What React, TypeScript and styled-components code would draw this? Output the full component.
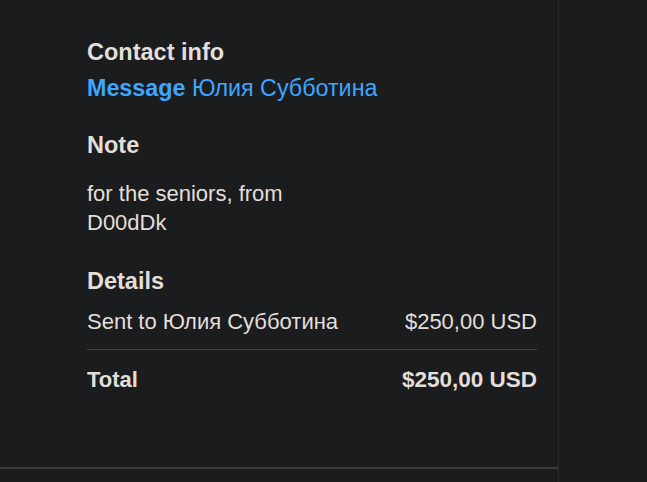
import React from "react";
import styled, { createGlobalStyle } from "styled-components";

const GlobalStyle = createGlobalStyle`
  html, body {
    margin: 0;
    padding: 0;
    background: #1b1c1e;
  }
  body {
    font-family: "Liberation Sans", Arial, sans-serif;
    color: #e2dfda;
  }
`;

const Page = styled.div`
  display: flex;
  height: 482px;
  width: 647px;
  background: #1b1c1e;
  overflow: hidden;
`;

const LeftColumn = styled.div`
  width: 558px;
  flex: none;
`;

const Panel = styled.div`
  height: 469px;
  box-sizing: border-box;
  padding: 38px 21px 0 87px;
  border-bottom: 2px solid #3b3c3e;
`;

const RightColumn = styled.div`
  flex: 1;
  border-left: 1px solid #2a2b2d;
`;

const Section = styled.section<{ $gap: number; $after: number }>`
  display: flex;
  flex-direction: column;
  gap: ${(p) => p.$gap}px;
  margin-bottom: ${(p) => p.$after}px;
`;

const Heading = styled.h3`
  margin: 0;
  font-size: 23.5px;
  line-height: 28px;
  font-weight: 700;
  color: #e2dfda;
`;

const LinkLine = styled.div`
  font-size: 23.3px;
  line-height: 28px;
  color: #3ea6ff;
`;

const Strong = styled.span`
  font-weight: 700;
`;

const Body = styled.p`
  margin: 0;
  font-size: 22px;
  line-height: 28.5px;
  color: #e2dfda;
  width: 230px;
`;

const Row = styled.div<{ $bold?: boolean; $divider?: boolean }>`
  display: flex;
  justify-content: space-between;
  align-items: baseline;
  font-size: ${(p) => (p.$bold ? "22.5px" : "22px")};
  line-height: 28px;
  font-weight: ${(p) => (p.$bold ? 700 : 400)};
  padding: ${(p) => (p.$divider ? "0 0 13px" : "16px 0 0")};
  border-bottom: ${(p) => (p.$divider ? "1px solid #45413b" : "none")};
`;

const Label = styled.span<{ $narrow?: boolean }>`
  font-size: ${(p) => (p.$narrow ? "22px" : "inherit")};
`;

export default function App() {
  return (
    <>
      <GlobalStyle />
      <Page>
        <LeftColumn>
          <Panel>
            <Section $gap={8} $after={29}>
              <Heading>Contact info</Heading>
              <LinkLine>
                <Strong>Message</Strong> Юлия Субботина
              </LinkLine>
            </Section>
            <Section $gap={21} $after={30}>
              <Heading>Note</Heading>
              <Body>for the seniors, from D00dDk</Body>
            </Section>
            <Section $gap={13} $after={0}>
              <Heading>Details</Heading>
              <div>
                <Row $divider>
                  <Label>Sent to Юлия Субботина</Label>
                  <Label>$250,00 USD</Label>
                </Row>
                <Row $bold>
                  <Label $narrow>Total</Label>
                  <Label>$250,00 USD</Label>
                </Row>
              </div>
            </Section>
          </Panel>
        </LeftColumn>
        <RightColumn />
      </Page>
    </>
  );
}
